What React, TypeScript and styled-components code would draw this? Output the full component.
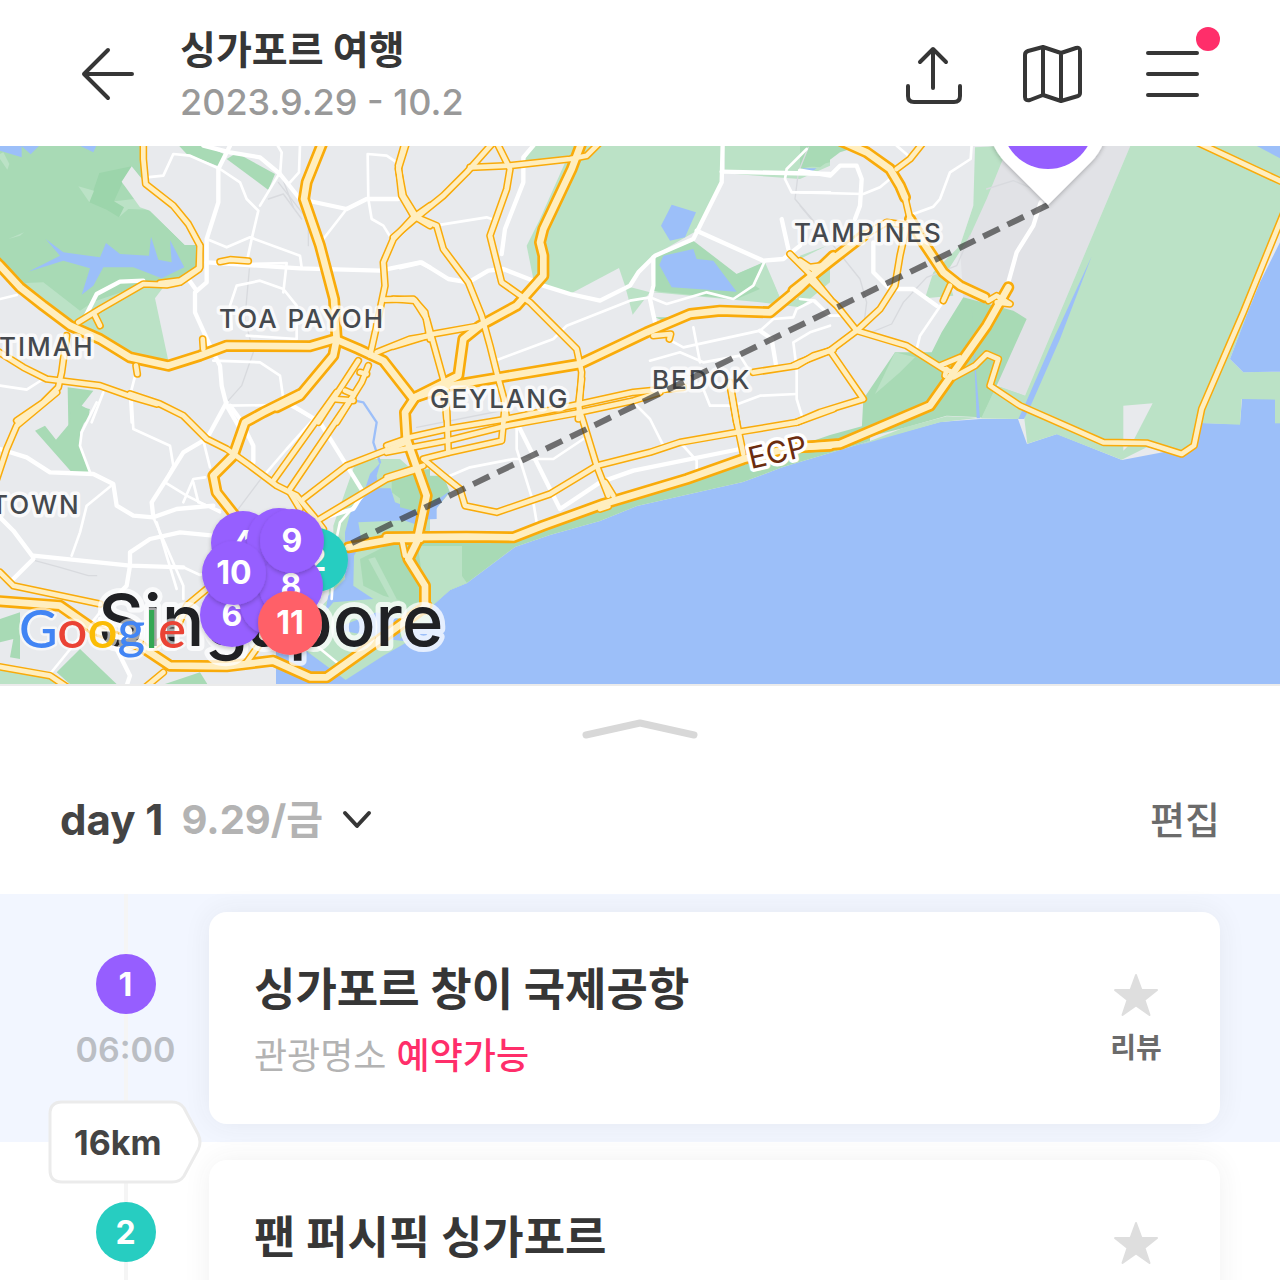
import React from "react";
import styled, { createGlobalStyle } from "styled-components";

const GlobalStyle = createGlobalStyle`
  *, *::before, *::after { box-sizing: border-box; }
  body {
    margin: 0;
    background: #fff;
    color: #363636;
    font-family: Inter, "Noto Sans CJK KR", sans-serif;
  }
  button { border: 0; padding: 0; background: none; color: inherit; font: inherit; cursor: pointer; }
  h1, h2, p { margin: 0; }
`;

const Screen = styled.div`
  display: flex;
  flex-direction: column;
  height: 100vh;
  overflow: hidden;
`;

const Header = styled.header`
  display: flex;
  align-items: center;
  flex: none;
  padding: 22px 60px 20px 80px;
`;

const IconButton = styled.button`
  position: relative;
  display: flex;
  flex: none;
  svg { display: block; }
`;

const TripInfo = styled.div`
  flex: 1;
  padding-left: 44px;
`;

const TripTitle = styled.h1`
  font-size: 39px;
  font-weight: 700;
  line-height: 56px;
`;

const TripDates = styled.p`
  color: #999;
  font-size: 36px;
  font-weight: 500;
  line-height: 48px;
`;

const Actions = styled.div`
  display: flex;
  align-items: center;
  gap: 56px;
  padding-right: 20px;
`;

const Dot = styled.span`
  position: absolute;
  top: -22px;
  right: -20px;
  width: 24px;
  height: 24px;
  border-radius: 50%;
  background: #ff2e6a;
`;

const MapArea = styled.section`
  flex: none;
  border-bottom: 2px solid #ebebeb;
  svg { display: block; width: 100%; height: 538px; }
`;

const MapLabel = styled.text`
  fill: #45494e;
  stroke: rgba(255, 255, 255, 0.75);
  stroke-width: 7px;
  stroke-linejoin: round;
  paint-order: stroke;
  font-size: 26px;
  font-weight: 500;
  letter-spacing: 2px;
`;

const RoadLabel = styled(MapLabel)`
  fill: #6b2c0f;
  stroke: #fff;
  font-size: 30px;
  font-weight: 400;
  letter-spacing: 0;
`;

const CityLabel = styled(MapLabel)`
  fill: #202124;
  stroke-width: 10px;
  font-size: 71px;
  letter-spacing: 0;
`;

const Brand = styled.text`
  font-family: Lato, sans-serif;
  font-size: 53px;
  font-weight: 500;
  stroke: rgba(255, 255, 255, 0.6);
  stroke-width: 5px;
  stroke-linejoin: round;
  paint-order: stroke;
`;

const PinText = styled.text`
  fill: #fff;
  font-size: 32px;
  font-weight: 700;
  text-anchor: middle;
`;

const Sheet = styled.main`
  flex: 1;
  min-height: 0;
  overflow: hidden;
`;

const Handle = styled.button`
  display: flex;
  justify-content: center;
  width: 100%;
  padding: 28px 0 40px;
`;

const DayBar = styled.div`
  display: flex;
  align-items: center;
  justify-content: space-between;
  padding: 8px 60px 44px;
`;

const DayButton = styled.button`
  display: flex;
  align-items: center;
  gap: 18px;
  font-size: 42px;
  font-weight: 700;
  line-height: 60px;
  color: #444;
`;

const DayDate = styled.span`
  color: #b3b3b3;
  font-size: 40px;
`;

const EditButton = styled.button`
  color: #6b6b6b;
  font-size: 38px;
  font-weight: 500;
  line-height: 60px;
`;

const Row = styled.article<{ $active?: boolean }>`
  display: flex;
  gap: 6px;
  padding: 0 60px 0 48px;
  background: ${(p) => (p.$active ? "#f2f6ff" : "#fff")};
`;

const Timeline = styled.div`
  position: relative;
  display: flex;
  flex: none;
  flex-direction: column;
  align-items: center;
  gap: 12px;
  width: 155px;
  padding-top: 60px;
  background: linear-gradient(#f5f5f5, #f5f5f5) center / 4px 100% no-repeat;
`;

const Badge = styled.span<{ $color: string }>`
  display: grid;
  place-items: center;
  width: 60px;
  height: 60px;
  border-radius: 50%;
  background: ${(p) => p.$color};
  color: #fff;
  font-size: 32px;
  font-weight: 700;
`;

const Time = styled.time`
  color: #bbbec4;
  font-size: 34px;
  font-weight: 600;
  line-height: 48px;
`;

const Distance = styled.div`
  position: absolute;
  z-index: 1;
  left: 0;
  bottom: -42px;
  display: grid;
  width: 154px;
  height: 84px;
  align-items: center;
  color: #444;
  font-size: 34px;
  font-weight: 700;
  svg, span { grid-area: 1 / 1; }
  span { padding-left: 26px; }
`;

const Card = styled.div`
  display: flex;
  flex: 1;
  justify-content: space-between;
  min-height: 212px;
  margin: 18px 0;
  padding: 48px 58px 40px 45px;
  border-radius: 18px;
  background: #fff;
  box-shadow: 0 0 28px rgba(60, 60, 60, 0.07);
`;

const PlaceName = styled.h2`
  font-size: 45px;
  font-weight: 700;
  line-height: 60px;
`;

const PlaceMeta = styled.p`
  padding-top: 8px;
  color: #b3b3b3;
  font-size: 36px;
  line-height: 56px;
`;

const Bookable = styled.span`
  color: #ff2e6a;
  font-weight: 500;
`;

const Review = styled.button`
  display: flex;
  flex-direction: column;
  align-items: center;
  gap: 10px;
  width: 52px;
  padding-top: 12px;
  align-self: flex-start;
  color: #6b6b6b;
  font-size: 28px;
  font-weight: 700;
  line-height: 40px;
  white-space: nowrap;
`;

type RoadKind = "highway" | "major" | "street" | "lane" | "rail" | "river";
type AreaKind = "sea" | "park" | "wood" | "grass" | "land" | "airport";

interface Tile {
  x: number;
  y: number;
  areas: [AreaKind, string][];
  roads: [RoadKind, string][];
}

const areaColor: Record<AreaKind, string> = {
  sea: "#9cbff9",
  park: "#a8dab5",
  wood: "#9cd5ab",
  grass: "#bbe2c6",
  land: "#e8eaed",
  airport: "#e1e2e6",
};

const casing: Partial<Record<RoadKind, number>> = { highway: 36, major: 23 };
const fillWidth: Record<RoadKind, number> = { highway: 20, major: 14, street: 13, lane: 8, rail: 4, river: 7 };
const fillColor: Record<RoadKind, string> = {
  highway: "#ffeebf",
  major: "#ffeebf",
  street: "#fff",
  lane: "#fff",
  rail: "#d8dade",
  river: "#9cbff9",
};

/* Each tile holds its shapes at three units to one map pixel. */
const tiles: Tile[] = [
  {
    x: 0,
    y: 140,
    areas: [
      ["park", "0,18 420,18 428,122 365,130 450,215 555,318 590,318 600,380 570,420 480,430 430,430 250,545 200,545 130,500 0,380"],
      ["wood", "298,102 395,82 415,105 430,125 368,130 342,187 402,182 357,235 320,212 268,190"],
      ["grass", "0,60 22,92 28,75 10,40 0,45"],
      ["grass", "235,142 268,190 282,155"],
      ["grass", "342,187 402,180 450,212 385,210 357,235 372,205"],
      ["grass", "25,300 72,280 60,290"],
      ["land", "365,128 395,82 428,122 470,160 555,240 590,318 555,318 450,215 420,205"],
      ["grass", "75,432 130,430 240,515 280,488 420,440 490,445 465,478 505,665 390,655 210,565"],
      ["sea", "0,18 120,18 92,46 65,22 65,55 0,35"],
      ["sea", "235,18 290,18 280,40"],
      ["park", "535,18 610,18 672,45 655,82 560,45"],
      ["park", "680,60 710,42 825,105 805,153"],
      ["sea", "137,300 190,340 300,355 318,312 360,345 447,350 453,293 475,362 515,370 510,303 553,385 485,418 400,385 310,385 280,440 245,467 270,388 190,365 85,398 180,350"],
      ["park", "203,745 280,755 245,800 268,812 268,840 240,860 205,860"],
    ],
    roads: [
      ["rail", "748,390 740,480 735,540 760,640 725,740 680,790"],
      ["rail", "835,130 925,245 925,320"],
      ["rail", "805,180 850,165 905,240"],
      ["rail", "850,125 880,205"],
      ["street", "690,20 655,90 655,190 620,300 620,430 585,460 585,520 630,620 660,680 665,740 680,800 715,860"],
      ["street", "610,20 690,40 780,55 840,105 900,180 1040,210 1100,180 1195,180"],
      ["street", "620,370 900,388 1140,395 1260,370 1290,385"],
      ["street", "255,535 290,465 360,428 430,425"],
      ["street", "565,420 590,455"],
      ["lane", "440,115 490,110 520,45 570,50 660,90 720,130 740,180 775,215 755,300 740,370"],
      ["lane", "840,100 780,200"],
      ["lane", "620,300 680,325 750,295 900,350 905,385"],
      ["lane", "695,570 690,500 710,440 780,425 850,450 890,500 890,600 740,590"],
      ["lane", "750,375 860,372 850,460"],
      ["lane", "900,18 897,100 870,130"],
      ["lane", "832,18 845,40 840,110"],
      ["lane", "1105,180 1103,45 1160,50 1190,70"],
      ["lane", "1105,180 1115,240 1150,260 1175,300"],
      ["lane", "1040,210 970,300"],
      ["lane", "640,665 780,670 840,710 850,780"],
      ["lane", "680,800 830,798 870,800 960,850"],
      ["lane", "0,740 80,752 130,720"],
      ["lane", "310,760 275,850"],
      ["lane", "408,700 390,770 395,850"],
      ["lane", "0,480 50,468"],
      ["major", "430,-10 430,60 437,135 520,200 565,255 600,320 597,390 540,430 500,438 430,435 300,510 235,550"],
      ["major", "600,320 600,385 540,425 480,432"],
      ["major", "-10,635 70,685 140,720 300,740 400,775 470,795"],
      ["major", "200,590 185,700 175,745 130,790 50,845"],
      ["major", "1215,10 1195,80 1205,170 1240,230 1290,260"],
      ["major", "1290,200 1240,235 1180,300 1150,370 1155,440 1130,560 1110,650"],
      ["major", "1075,665 955,850"],
      ["major", "1105,680 1085,730 1010,850"],
      ["major", "1035,755 1060,765"],
      ["major", "1080,700 1100,705"],
      ["major", "1155,482 1240,480 1275,520 1290,600"],
      ["major", "1130,640 1230,600 1290,590"],
      ["major", "660,368 690,362 745,366"],
      ["major", "285,530 300,560"],
      ["major", "608,600 610,630"],
      ["major", "408,680 412,705"],
      ["highway", "-20,360 0,380 60,445 130,500 210,560 300,600 390,655 505,680 600,650 680,620 930,622 1005,600 1075,630 1150,665 1240,780"],
      ["highway", "968,10 920,130 912,180 960,320 1002,480 1010,600 1000,650 900,770 830,805"],
    ],
  },
  {
    x: 400,
    y: 140,
    areas: [
      ["grass", "400,18 970,18 965,130 890,275 760,350 715,400 690,440 600,485 510,465 430,440 400,420 380,320 420,240 500,60 370,70"],
      ["land", "510,465 657,387 675,440 600,487"],
      ["grass", "675,440 750,460 698,527"],
      ["grass", "972,18 1290,18 1290,80 1200,120 975,103"],
      ["park", "1225,18 1290,18 1290,70 1200,90"],
      ["sea", "1205,88 1250,88 1235,98"],
      ["grass", "1290,340 1290,430 1200,505 1080,490 760,460 890,430 1010,405 1095,370 1140,475 1190,480"],
      ["land", "1100,372 1200,350 1260,360 1140,475"],
      ["park", "760,355 880,305 1010,405 1080,450 1010,480 900,470 752,455"],
      ["park", "1010,405 1095,368 1070,430 1040,455"],
      ["sea", "815,197 888,220 855,295 810,305 783,260"],
      ["sea", "790,350 880,330 890,360 940,365 1010,458 815,445 778,378"],
      ["park", "765,535 850,535 800,550"],
    ],
    roads: [
      ["rail", "1225,25 1195,100 1185,180 1240,245"],
      ["street", "400,20 370,55 370,130 315,270 305,345"],
      ["street", "430,440 510,465 600,485 690,440 715,400 765,350 880,300 965,130 968,18"],
      ["street", "890,275 1000,325 1090,365 1150,360 1200,320"],
      ["street", "965,98 1290,105"],
      ["lane", "1095,365 1060,440 1000,480 920,460 800,495 750,475 690,485 500,560 460,600 285,665"],
      ["street", "760,355 760,440 750,480 765,550"],
      ["lane", "105,260 260,235 290,245"],
      ["street", "0,385 65,370 145,420 205,430 265,395 310,390 400,425"],
      ["lane", "1290,160 1175,160 1155,120 1160,90 1220,30"],
      ["lane", "785,590 850,625 1080,575 1120,540 1180,535 1190,510 1240,485 1290,530"],
      ["lane", "750,665 840,640 910,670 1020,650 1045,690"],
      ["lane", "880,565 900,670"],
      ["street", "1080,575 1115,600 1130,690"],
      ["street", "1145,240 1165,330"],
      ["lane", "1290,560 1230,580 1180,610 1190,690 1190,780 1210,845"],
      ["lane", "910,750 930,800 1000,800 1080,770 1190,765"],
      ["major", "20,10 -5,90 10,170 50,235 110,260 130,330 205,430 245,530 270,620 290,700 312,780 320,840"],
      ["major", "280,10 200,100 130,170 50,235 -20,295"],
      ["major", "290,10 330,90 320,150 270,290 305,430 390,490 530,630 545,700 535,840"],
      ["major", "210,85 330,80 510,60 560,50 595,15"],
      ["major", "-20,480 45,485 80,540 130,720 140,840"],
      ["major", "-20,622 100,585 240,560"],
      ["major", "1060,700 1190,680 1240,650 1300,632"],
      ["major", "990,740 1010,850"],
      ["major", "1170,345 1225,400 1290,480"],
      ["major", "1225,385 1265,380"],
      ["major", "760,590 812,585 808,600"],
      ["highway", "545,10 515,90 430,270 420,310 430,350 430,410 350,500 240,560 190,600 175,710 45,775"],
      ["highway", "45,775 150,740 300,715 540,675 740,580 870,525 960,515 1110,520 1200,445 1300,350"],
    ],
  },
  {
    x: 800,
    y: 140,
    areas: [
      ["park", "0,18 190,18 120,40 60,85 0,80"],
      ["grass", "0,350 80,320 0,360"],
      ["airport", "606,18 992,18 675,770 600,745 560,640 640,520 490,475 480,330"],
      ["grass", "525,25 625,20 560,180 510,290 440,400 460,470 375,478 400,400 480,320 520,200"],
      ["grass", "992,18 1440,18 1440,250 1345,515 1290,660 1330,700 1440,698 1440,782 1325,780 1320,857 1205,852 1185,920 1145,945 1040,925 965,962 770,886 682,914 672,830 655,840 540,838 590,740 675,770"],
      ["sea", "1440,310 1380,430 1345,515 1290,660 1330,700 1440,698"],
      ["grass", "1425,780 1440,780 1440,853 1425,853"],
      ["sea", "1365,18 1440,18 1440,58"],
      ["park", "490,475 640,515 680,540 590,740 545,835 440,830 320,865 120,915 185,875 190,780 285,640 395,640 425,580"],
      ["grass", "285,640 345,655 300,700 225,765"],
      ["grass", "590,740 675,770 655,838 545,838"],
      ["grass", "315,865 440,832 540,836 420,850 180,918"],
      ["land", "970,800 1058,793 1000,905 970,935"],
      ["sea", "875,352 780,600 692,800 672,840 655,840 678,790 765,590"],
      ["sea", "515,498 520,600 530,720 540,838 530,838 524,690"],
    ],
    roads: [
      ["rail", "0,200 100,320 180,420 200,490 190,570"],
      ["rail", "560,150 640,125 700,150"],
      ["rail", "510,290 470,380 380,415 310,490 275,555 190,590"],
      ["street", "0,95 90,110 120,80 170,80 185,120 180,200 165,240"],
      ["lane", "0,160 190,165 240,145 270,120"],
      ["lane", "515,18 512,60 450,100 420,180 400,203 340,225"],
      ["lane", "290,20 325,50"],
      ["street", "220,310 220,400 270,450 340,450 410,500"],
      ["lane", "435,480 360,590 350,630"],
      ["lane", "0,480 45,485 90,530 130,530"],
      ["street", "722,190 700,260 650,340 625,430"],
      ["major", "370,10 330,60 290,90"],
      ["major", "320,260 300,350 285,440 240,510 170,575 90,635 0,670 -20,680"],
      ["major", "30,425 110,500 170,575 320,620 430,690 460,700"],
      ["major", "90,635 190,780 60,820 -10,850"],
      ["major", "420,680 480,655"],
      ["major", "435,710 440,690"],
      ["major", "450,440 430,485"],
      ["major", "460,715 525,680 560,645 595,660 570,740 660,800 910,910 1040,912 1145,945 1182,920 1205,810 1330,520 1460,200"],
      ["major", "1170,0 1460,135"],
      ["major", "565,485 590,470 630,495 590,490"],
      ["major", "0,365 45,395"],
      ["highway", "110,0 200,40 270,90 300,140 315,175"],
      ["major", "315,175 330,240"],
      ["highway", "-20,455 100,360 190,290"],
      ["major", "190,290 260,250 330,260"],
      ["highway", "330,240 370,310 430,400 480,440 555,475"],
      ["highway", "625,445 560,560 390,800 120,915 0,925"],
    ],
  },
  {
    x: 0,
    y: 400,
    areas: [
      ["park", "208,0 240,0 238,25 270,30 240,100 240,140 270,220 215,220 105,95 135,80 168,122 212,70"],
      ["park", "0,660 60,640 60,780 30,775 40,720 0,730"],
      ["grass", "0,795 150,825 190,860 0,860"],
      ["park", "170,820 240,750 355,860 215,860"],
      ["park", "480,860 600,820 625,860"],
      ["grass", "1070,180 1200,180 1290,260 1290,680 1060,860 870,720 985,600 1000,420 1000,380"],
      ["park", "1175,220 1290,210 1290,320 1230,320 1175,280"],
      ["sea", "1142,190 1130,230 1135,268 1172,268 1185,310 1240,330 1310,290 1310,360 1075,370 1085,430 1062,470 1060,560 1120,600 1000,610 975,640 985,590 1035,540 1035,400 1050,345 1095,270 1110,225"],
      ["park", "1080,480 1180,430 1300,440 1300,620 1240,615 1150,590 1090,560"],
      ["grass", "1105,480 1125,475 1190,600 1170,600"],
      ["sea", "1000,690 1130,640 1290,690 1240,730 1160,720"],
      ["sea", "1290,690 1290,860 1010,860 1150,770"],
    ],
    roads: [
      ["rail", "105,485 180,505 265,530 290,530"],
      ["rail", "790,230 700,350"],
      ["river", "1065,5 1090,10 1130,70 1120,130 1140,190"],
      ["street", "0,150 80,175 150,220 280,225 340,255 350,320 400,350 460,355 530,330 640,320"],
      ["street", "100,475 40,395 0,355"],
      ["street", "100,470 390,500 550,505"],
      ["street", "100,480 30,550"],
      ["lane", "340,255 260,320 240,400 215,470"],
      ["street", "460,355 455,310 500,240 550,160 610,125"],
      ["lane", "610,125 630,205"],
      ["lane", "395,0 400,90 510,140 520,200 495,250 560,290 660,340"],
      ["lane", "550,310 580,240 615,235"],
      ["lane", "580,250 595,310 660,335"],
      ["lane", "460,355 480,400 550,560 550,600"],
      ["lane", "470,370 530,570"],
      ["street", "640,410 540,400 450,420 390,460 390,500 380,560 300,640"],
      ["lane", "300,640 150,825"],
      ["lane", "550,505 600,528 620,520"],
      ["lane", "290,10 245,100 240,140 270,220"],
      ["street", "690,20 720,60 760,140 760,190"],
      ["street", "680,10 620,120"],
      ["street", "870,15 960,70 1090,280 1060,330 960,360"],
      ["lane", "1090,290 1020,370 1005,440 995,600"],
      ["lane", "950,50 860,150 800,220"],
      ["street", "300,660 350,750 390,830 380,860"],
      ["lane", "900,700 1010,790"],
      ["major", "0,520 40,560 300,615"],
      ["major", "390,-15 480,15 550,50 620,120 680,150 750,200 830,260 890,290 940,350 970,390"],
      ["major", "170,-20 50,80 20,150 -10,240"],
      ["major", "1010,-20 820,245"],
      ["major", "1060,-10 870,270"],
      ["major", "1000,0 1060,5"],
      ["major", "870,280 900,330"],
      ["major", "910,300 1040,200 1130,165 1220,130"],
      ["major", "960,360 1160,240 1240,215"],
      ["major", "-20,800 150,830 210,870"],
      ["major", "430,870 490,820"],
      ["major", "620,570 560,620 530,690 450,750"],
      ["major", "740,790 790,720"],
      ["major", "1205,420 1215,470"],
      ["highway", "900,-15 790,40 735,70 700,170 640,230 650,280 705,350"],
      ["highway", "1045,445 1180,420 1260,420"],
      ["highway", "-20,605 180,620 280,690 420,740 510,800 680,802 820,785 930,835 980,835 1170,700 1280,620"],
    ],
  },
  {
    x: 400,
    y: 380,
    areas: [
      ["park", "0,290 130,290 150,340 90,410 0,400"],
      ["sea", "0,385 60,400 150,335 90,415 60,440 0,420"],
    ],
    roads: [
      ["rail", "50,145 330,90"],
      ["street", "350,130 480,390 600,310 700,275 1020,210"],
      ["lane", "350,130 350,210 400,370 410,430"],
      ["lane", "150,290 210,265 340,240 460,240 550,180"],
      ["lane", "680,50 750,120 790,200"],
      ["lane", "845,195 890,245 890,275"],
      ["major", "-40,200 30,175 140,150 320,120 540,75 700,40 850,25"],
      ["major", "-40,220 140,185 320,140 540,100 700,65 780,40"],
      ["major", "140,80 145,220"],
      ["major", "315,80 305,185 150,220 70,240 130,290 180,330 195,380 290,400 450,345 590,260 750,220 840,190 1010,160 1190,130 1300,90"],
      ["major", "-40,295 70,260"],
      ["major", "545,0 535,80 590,260 625,350"],
      ["major", "990,10 1010,130 1030,225"],
      ["major", "615,310 640,350"],
      ["major", "600,390 625,382"],
      ["highway", "45,55 15,100 20,180 80,350 50,490 25,540 75,620 75,690"],
      ["highway", "-40,475 200,473 340,475 430,440 610,375 860,300 1030,240 1180,205 1290,200"],
    ],
  },
];

const seaOutline =
  "276,690 276,645 335,640 400,620 432,607 450,591 467,584 515,548 550,536 600,522 637,507 743,483 783,468 860,445 940,423 980,420 1018,420 1027,445 1057,435 1122,461 1180,450 1201,424 1240,425 1242,400 1275,400 1275,424 1290,424 1290,690";
const coastPark =
  "400,540 513,540 607,510 743,466 830,436 870,425 870,442 783,468 743,483 637,507 600,522 550,536 515,548 467,584 450,591 432,607 400,640";

const inTile = (t: Tile) => `translate(${t.x} ${t.y}) scale(${1 / 3})`;

const pins: [string, number, number, string][] = [
  ["2", 316, 561, "#27cdc1"],
  ["4", 243, 544, "#965eff"],
  ["3", 262, 568, "#965eff"],
  ["5", 279, 541, "#965eff"],
  ["6", 232, 616, "#965eff"],
  ["7", 272, 604, "#965eff"],
  ["8", 291, 587, "#965eff"],
  ["10", 234, 574, "#965eff"],
  ["9", 292, 542, "#965eff"],
  ["11", 290, 624, "#ff6168"],
];

function TripMap() {
  return (
    <MapArea aria-label="지도">
      <svg viewBox="0 147 1280 538" preserveAspectRatio="xMidYMid slice">
        <defs>
          <filter id="shade" x="-20%" y="-20%" width="140%" height="150%">
            <feDropShadow dx="0" dy="2" stdDeviation="2" floodColor="#000" floodOpacity="0.22" />
          </filter>
        </defs>
        <rect x="-10" y="140" width="1300" height="550" fill={areaColor.land} />
        <polygon points={seaOutline} fill={areaColor.sea} />
        {tiles.map((t) => (
          <g key={`${t.x}-${t.y}`} transform={inTile(t)}>
            {t.areas.map(([kind, points], i) => (
              <polygon key={i} points={points} fill={areaColor[kind]} />
            ))}
          </g>
        ))}
        <polygon points={coastPark} fill={areaColor.park} />
        <polygon points="418,547 462,547 462,577 467,584 450,591 432,607 425,600" fill={areaColor.grass} />
        {(["minor", "casing", "fill"] as const).map((pass) => (
          <g key={pass} fill="none" strokeLinejoin="round" strokeLinecap="round">
            {tiles.map((t) => (
              <g key={`${t.x}-${t.y}`} transform={inTile(t)}>
                {t.roads
                  .filter(([kind]) => (pass === "minor") === !casing[kind])
                  .map(([kind, points], i) => (
                    <polyline
                      key={i}
                      points={points}
                      stroke={pass === "casing" ? "#f9ab0a" : fillColor[kind]}
                      strokeWidth={pass === "casing" ? casing[kind] : fillWidth[kind]}
                    />
                  ))}
              </g>
            ))}
          </g>
        ))}
        <MapLabel x="219" y="329">TOA PAYOH</MapLabel>
        <MapLabel x="-1" y="357">TIMAH</MapLabel>
        <MapLabel x="-9" y="515">TOWN</MapLabel>
        <MapLabel x="430" y="409">GEYLANG</MapLabel>
        <MapLabel x="652" y="390">BEDOK</MapLabel>
        <MapLabel x="794" y="243">TAMPINES</MapLabel>
        <RoadLabel x="751" y="470" transform="rotate(-13 751 470)">ECP</RoadLabel>
        <CityLabel x="98" y="647">Singapore</CityLabel>
        <path d="M1048 206 350 545" stroke="#333" strokeOpacity="0.68" strokeWidth="6" strokeDasharray="18 9" />
        <Brand x="19" y="649">
          <tspan fill="#4285f4">G</tspan>
          <tspan fill="#ea4335">o</tspan>
          <tspan fill="#fbbc04">o</tspan>
          <tspan fill="#4285f4">g</tspan>
          <tspan fill="#34a853">l</tspan>
          <tspan fill="#ea4335">e</tspan>
        </Brand>
        <g filter="url(#shade)">
          <path d="M1048 206 1005 163A60 60 0 1 1 1091 163Z" fill="#fff" />
          <circle cx="1048" cy="124" r="46" fill="#965eff" />
        </g>
        {pins.map(([label, x, y, color]) => (
          <g key={label}>
            <circle cx={x} cy={y} r="32" fill={color} filter="url(#shade)" />
            <PinText x={x} y={y + 11}>{label}</PinText>
          </g>
        ))}
      </svg>
    </MapArea>
  );
}

const line = { fill: "none", stroke: "#363636", strokeWidth: 4, strokeLinecap: "round", strokeLinejoin: "round" } as const;

const Star = () => (
  <svg width="48" height="46" viewBox="0 0 48 46" aria-hidden="true">
    <path
      d="M24 3 29.500 18H45L32.500 28 37.500 43 24 33.500 10.500 43 15.500 28 3 18H18.500Z"
      fill="#dedede"
      stroke="#dedede"
      strokeWidth="2"
      strokeLinejoin="round"
    />
  </svg>
);

interface Place {
  order: number;
  color: string;
  name: string;
  time?: string;
  category?: string;
  bookable?: string;
  review?: string;
  distance?: string;
}

const places: Place[] = [
  {
    order: 1,
    color: "#965eff",
    name: "싱가포르 창이 국제공항",
    time: "06:00",
    category: "관광명소",
    bookable: "예약가능",
    review: "리뷰",
    distance: "16km",
  },
  { order: 2, color: "#27cdc1", name: "팬 퍼시픽 싱가포르" },
];

function PlaceRow({ place }: { place: Place }) {
  return (
    <Row $active={place.order === 1}>
      <Timeline>
        <Badge $color={place.color}>{place.order}</Badge>
        {place.time && <Time>{place.time}</Time>}
        {place.distance && (
          <Distance>
            <svg width="154" height="84" viewBox="0 0 154 84" aria-hidden="true">
              <path
                d="M14 2H124Q132 2 136 8L150 34Q154 42 150 50L136 76Q132 82 124 82H14Q2 82 2 70V14Q2 2 14 2Z"
                fill="#fff"
                stroke="#ebebeb"
                strokeWidth="3"
              />
            </svg>
            <span>{place.distance}</span>
          </Distance>
        )}
      </Timeline>
      <Card>
        <div>
          <PlaceName>{place.name}</PlaceName>
          {place.category && (
            <PlaceMeta>
              {place.category} <Bookable>{place.bookable}</Bookable>
            </PlaceMeta>
          )}
        </div>
        <Review aria-label="리뷰">
          <Star />
          {place.review}
        </Review>
      </Card>
    </Row>
  );
}

export default function App() {
  return (
    <Screen>
      <GlobalStyle />
      <Header>
        <IconButton aria-label="뒤로">
          <svg width="56" height="56" viewBox="0 0 56 56">
            <path d="M28 4 4 28 28 52M4 28H52" {...line} />
          </svg>
        </IconButton>
        <TripInfo>
          <TripTitle>싱가포르 여행</TripTitle>
          <TripDates>2023.9.29 - 10.2</TripDates>
        </TripInfo>
        <Actions>
          <IconButton aria-label="공유">
            <svg width="60" height="60" viewBox="0 0 60 60">
              <path d="M27 44V6M14 18 27 5 40 18M2 42V52Q2 58 8 58H48Q54 58 54 52V42" {...line} />
            </svg>
          </IconButton>
          <IconButton aria-label="지도 보기">
            <svg width="62" height="60" viewBox="0 0 62 60">
              <path d="M3 11Q3 8 6 7L21 3 39 9 54 4Q58 3 58 7V49Q58 51 56 52L39 57 21 51 8 56Q3 57 3 53ZM21 3V51M39 9V57" {...line} />
            </svg>
          </IconButton>
          <IconButton aria-label="메뉴">
            <svg width="60" height="50" viewBox="0 0 60 50">
              <path d="M8 4H57M8 25H57M8 46H57" {...line} />
            </svg>
            <Dot />
          </IconButton>
        </Actions>
      </Header>
      <TripMap />
      <Sheet>
        <Handle aria-label="목록 펼치기">
          <svg width="120" height="28" viewBox="0 0 120 28">
            <path d="M6 21 60 9 114 21" fill="none" stroke="#d8d8d8" strokeWidth="7" strokeLinecap="round" strokeLinejoin="round" />
          </svg>
        </Handle>
        <DayBar>
          <DayButton>
            <span>day 1</span>
            <DayDate>9.29/금</DayDate>
            <svg width="32" height="24" viewBox="0 0 32 24" aria-hidden="true">
              <path d="M4 5 16 18 28 5" {...line} />
            </svg>
          </DayButton>
          <EditButton>편집</EditButton>
        </DayBar>
        {places.map((place) => (
          <PlaceRow key={place.order} place={place} />
        ))}
      </Sheet>
    </Screen>
  );
}
